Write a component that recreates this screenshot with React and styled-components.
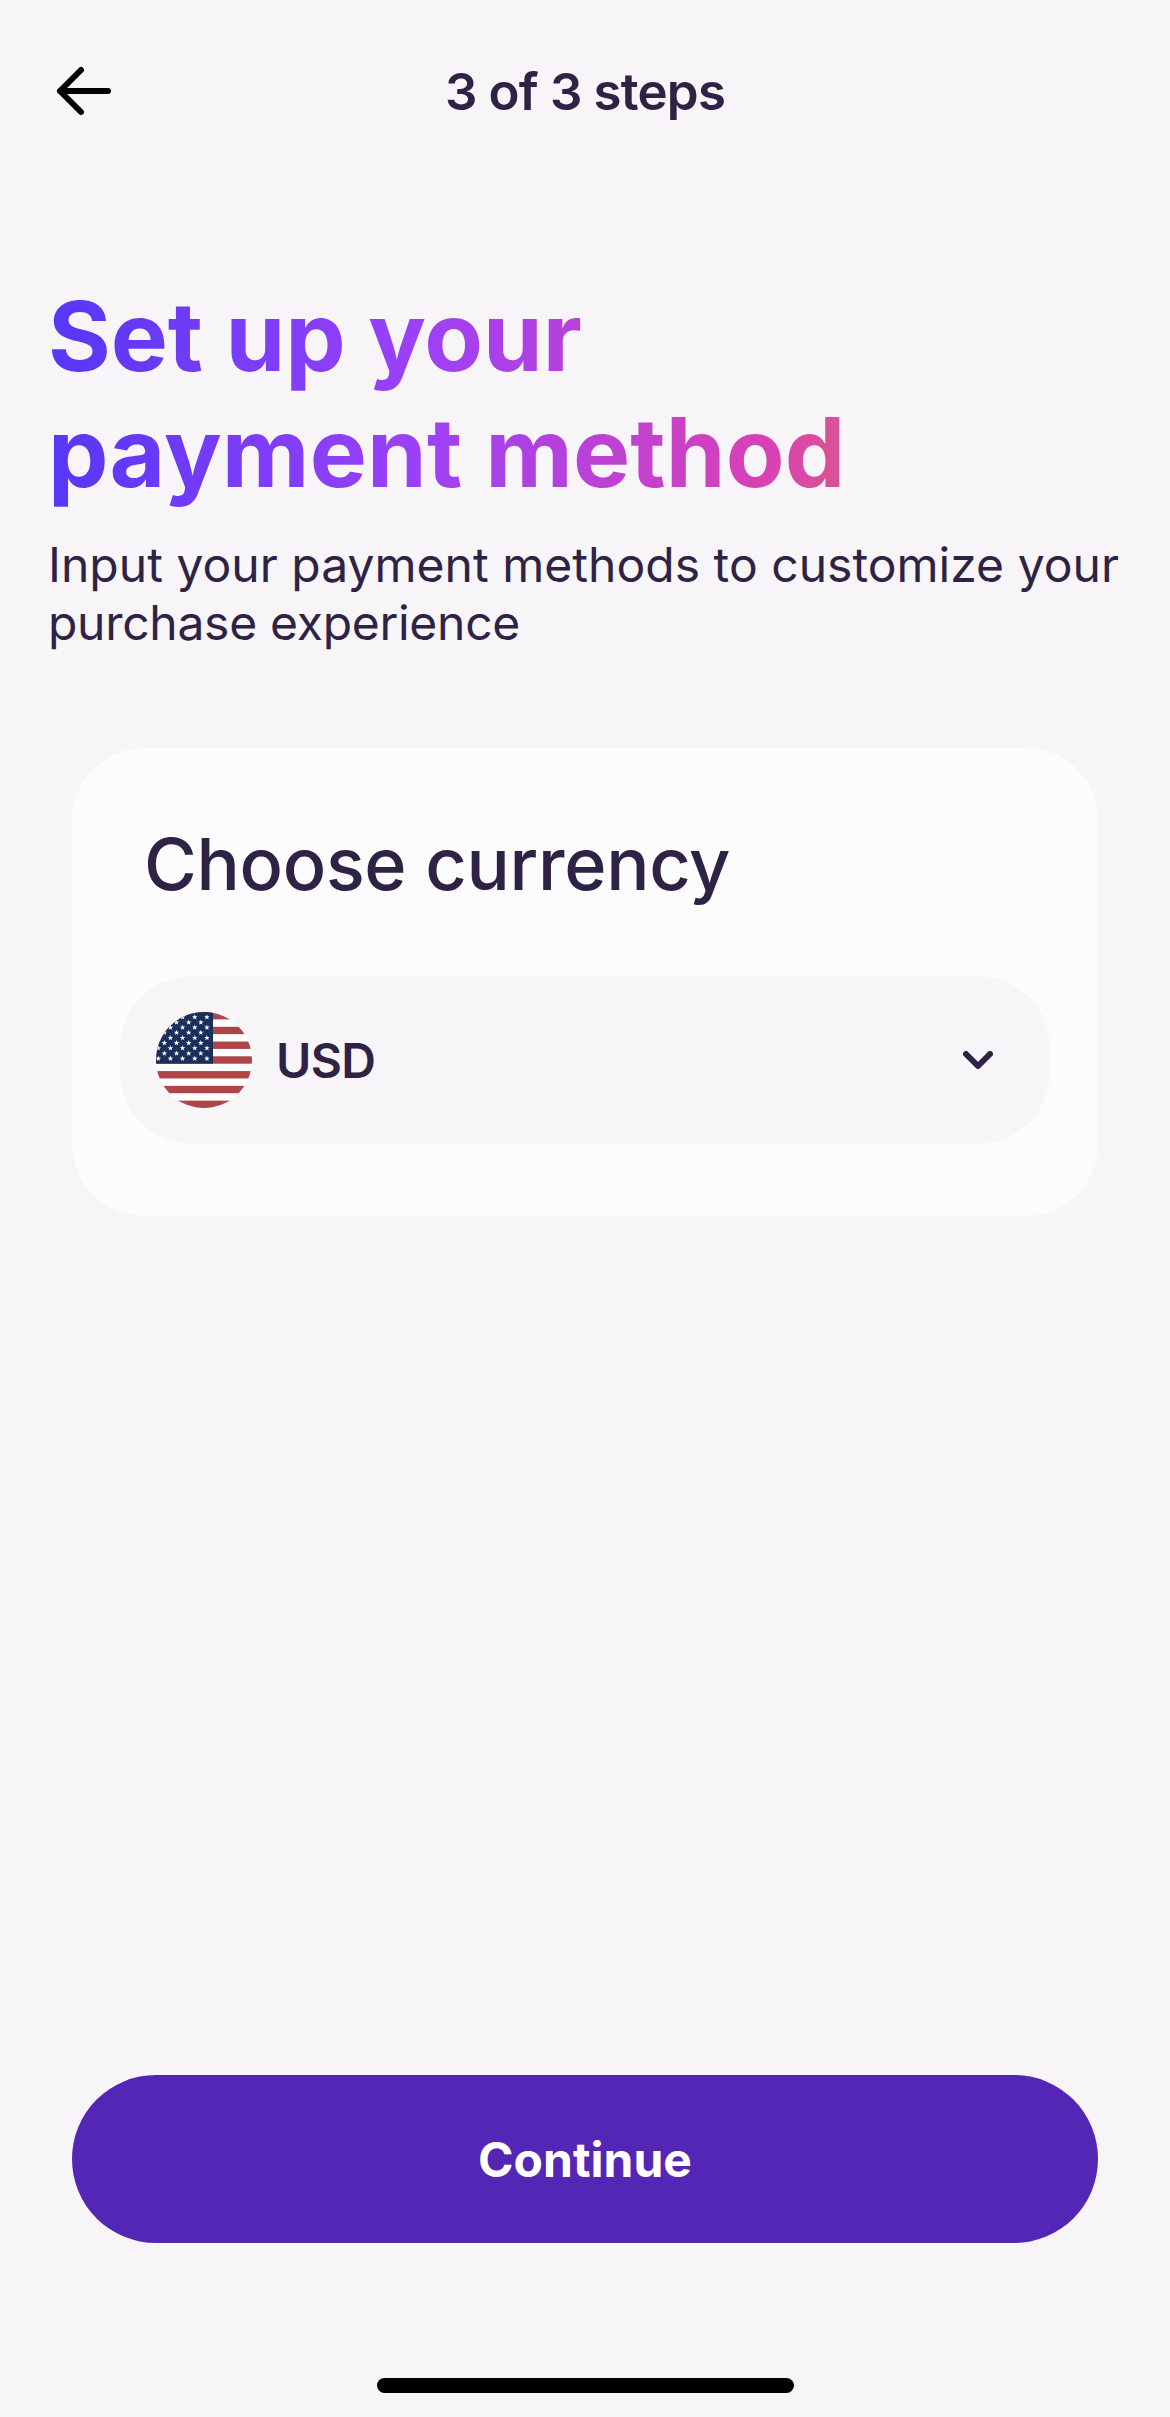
import React from 'react'
import styled, { createGlobalStyle } from "styled-components"

const stars = []
for (let row = 1; row <= 9; row++) {
    for (let col = 1; col <= 11; col++) {
        if ((row + col) % 2 === 0) {
            stars.push([57 - col * 6.08, row * 5.17])
        }
    }
}

const starPoints = (cx, cy, r) => {
    const points = []
    for (let i = 0; i < 10; i++) {
        const radius = i % 2 === 0 ? r : r * 0.4
        const angle = (Math.PI / 5) * i - Math.PI / 2
        points.push(`${cx + radius * Math.cos(angle)},${cy + radius * Math.sin(angle)}`)
    }
    return points.join(" ")
}

const UsFlag = () => {
    return (
        <Flag viewBox="0 0 96 96">
          <clipPath id="round"><circle cx="48" cy="48" r="48"/></clipPath>
          <g clipPath="url(#round)">
            <rect width="96" height="96" fill="#fff"/>
            {[0, 2, 4, 6, 8, 10, 12].map((i) => (
              <rect key={i} y={i * 7.385} width="96" height="7.385" fill="#ae4648"/>
            ))}
            <rect width="57" height="51.7" fill="#1b2f5d"/>
            {stars.map(([x, y]) => (
              <polygon key={`${x}-${y}`} points={starPoints(x, y, 2.9)} fill="#fff"/>
            ))}
          </g>
        </Flag>
    )
}

const App = () => {
    return (
        <Container>
          <Global/>
          <Header>
            <Back aria-label="Back">
              <svg width="60" height="54" viewBox="0 0 60 54" fill="none" stroke="#000" strokeWidth="6" strokeLinecap="round" strokeLinejoin="round">
                <path d="M54 27H6M27 6L6 27L27 48"/>
              </svg>
            </Back>
            <Step>3 of 3 steps</Step>
          </Header>
          <Intro>
            <Title>
              <Line $space="-0.1px">Set up your</Line>
              <Line $space="0.17px">payment method</Line>
            </Title>
            <Sub>
              <Line $space="0.03px">Input your payment methods to customize your</Line>
              <Line $space="-0.28px">purchase experience</Line>
            </Sub>
          </Intro>
          <Card>
            <CardTitle>Choose currency</CardTitle>
            <Select>
              <UsFlag/>
              <Code>USD</Code>
              <svg width="30" height="18" viewBox="0 0 30 18" fill="none" stroke="#2e2345" strokeWidth="6" strokeLinecap="round" strokeLinejoin="round">
                <path d="M3 3L15 15L27 3"/>
              </svg>
            </Select>
          </Card>
          <Button>Continue</Button>
          <HomeBar/>
        </Container>
    )
}

export default App

const Global = createGlobalStyle`
body {
margin: 0;
background-color: #f7f5f8;
}
* {
box-sizing: border-box;
}
`
const Container = styled.div`
width: 1170px;
height: 2417px;
display: flex;
flex-direction: column;
background-color: #f7f5f8;
font-family: Inter, sans-serif;
font-optical-sizing: none;
color: #2e2345;
overflow: hidden;
`
const Header = styled.div`
height: 182px;
padding: 0 54px;
display: grid;
grid-template-columns: 60px 1fr 60px;
align-items: center;
`
const Back = styled.button`
height: 54px;
padding: 0;
border: none;
outline: none;
background: none;
display: flex;
cursor: pointer;
`
const Step = styled.div`
padding-top: 2px;
font-size: 51px;
font-weight: 600;
line-height: 62px;
letter-spacing: -0.8px;
text-align: center;
`
const Intro = styled.div`
display: flex;
flex-direction: column;
align-items: flex-start;
padding: 96px 48px 0;
`
const Line = styled.span`
display: block;
white-space: nowrap;
letter-spacing: ${(props) => props.$space};
`
const Title = styled.h1`
margin: 0;
font-size: 96px;
font-weight: 700;
line-height: 116px;
background: linear-gradient(90deg, #5537f6 0%, #9b41f8 46%, #d941b5 90%, #da5490 100%);
background-clip: text;
-webkit-background-clip: text;
color: transparent;
`
const Sub = styled.p`
margin: 26px 0 0;
font-size: 48px;
font-weight: 400;
line-height: 58px;
`
const Card = styled.div`
margin: 96px 72px 0;
height: 468px;
padding: 72px 48px;
border-radius: 72px;
background-color: #fcfcfc;
display: flex;
flex-direction: column;
justify-content: space-between;
`
const CardTitle = styled.div`
padding-left: 24px;
font-size: 72px;
font-weight: 500;
line-height: 87px;
letter-spacing: -0.3px;
`
const Select = styled.div`
height: 168px;
padding: 0 57px 0 36px;
border-radius: 72px;
background-color: #f7f5f8;
display: flex;
align-items: center;
`
const Flag = styled.svg`
width: 96px;
height: 96px;
`
const Code = styled.div`
flex: 1;
margin-left: 24px;
padding-top: 1px;
font-size: 48px;
font-weight: 600;
line-height: 58px;
letter-spacing: -0.6px;
`
const Button = styled.button`
margin: auto 72px 0;
height: 168px;
border: none;
outline: none;
border-radius: 84px;
background-color: #5426b5;
color: white;
font-family: inherit;
font-size: 48px;
font-weight: 700;
cursor: pointer;
`
const HomeBar = styled.div`
width: 417px;
height: 15px;
margin: 135px auto 24px;
border-radius: 8px;
background-color: black;
flex-shrink: 0;
`
